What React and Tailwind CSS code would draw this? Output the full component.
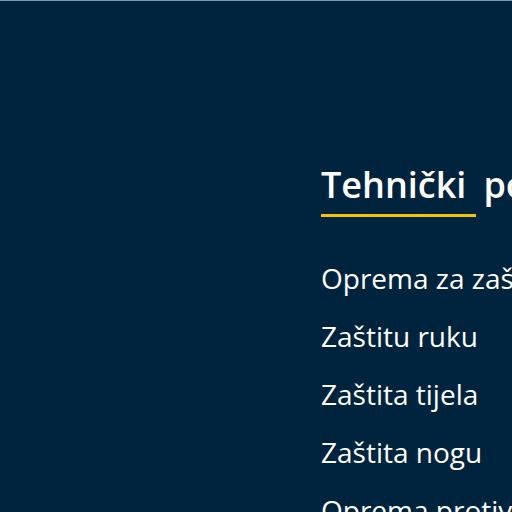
import React from 'react'

const items = [
  'Oprema za zaštitu glave',
  'Zaštitu ruku',
  'Zaštita tijela',
  'Zaštita nogu',
  'Oprema protiv pada',
]

export default function App() {
  return (
    <div
      className="w-full h-[512px] overflow-hidden bg-[#00243d] border-t border-[#8095a8] text-white"
      style={{ fontFamily: '"Open Sans", "Noto Sans", sans-serif' }}
    >
      <div className="pl-[321px] pt-[162px] whitespace-nowrap">
        <h2 className="flex items-start text-[36px] leading-[44px] font-semibold">
          <span className="inline-block pb-[7px] pr-[10px] border-b-[3px] border-[#f5c400]">Tehnički</span>
          <span className="ml-[7px]">podaci</span>
        </h2>
        <ul className="mt-[32px]">
          {items.map((item) => (
            <li key={item} className="text-[28px] leading-[58px] font-normal">
              {item}
            </li>
          ))}
        </ul>
      </div>
    </div>
  )
}
